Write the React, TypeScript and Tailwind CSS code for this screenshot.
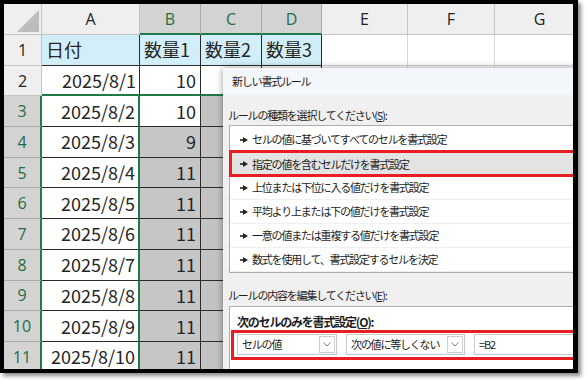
import React from "react";

const cols = ["A", "B", "C", "D", "E", "F", "G"];

const rows: string[][] = [
  ["日付", "数量1", "数量2", "数量3"],
  ["2025/8/1", "10"],
  ["2025/8/2", "10"],
  ["2025/8/3", "9"],
  ["2025/8/4", "11"],
  ["2025/8/5", "11"],
  ["2025/8/6", "11"],
  ["2025/8/7", "11"],
  ["2025/8/8", "11"],
  ["2025/8/9", "11"],
  ["2025/8/10", "11"],
];

const rules = [
  "セルの値に基づいてすべてのセルを書式設定",
  "指定の値を含むセルだけを書式設定",
  "上位または下位に入る値だけを書式設定",
  "平均より上または下の値だけを書式設定",
  "一意の値または重複する値だけを書式設定",
  "数式を使用して、書式設定するセルを決定",
];

const Arrow = () => (
  <svg width="8" height="6" viewBox="0 0 8 6" className="shrink-0">
    <rect x="0" y="2.2" width="4" height="1.6" fill="#222" />
    <polygon points="3,0 8,3 3,6" fill="#222" />
  </svg>
);

const Chevron = () => (
  <svg width="8" height="5" viewBox="0 0 8 5">
    <polyline points="0.5,0.5 4,4 7.5,0.5" fill="none" stroke="#808080" strokeWidth="1" />
  </svg>
);

const Combo = ({ label, width }: { label: string; width: string }) => (
  <div className={`${width} shrink-0 h-[21px] flex border border-[#c8c8c8] bg-white`}>
    <div className="flex-1 flex items-center pl-[4px] whitespace-nowrap text-[#222]">{label}</div>
    <div className="w-[16px] my-[1px] mr-[1px] flex items-center justify-center border border-[#d0d0d0]">
      <Chevron />
    </div>
  </div>
);

function cellClass(r: number, c: number) {
  // r: 1-based row, c: 0-based column (A=0)
  let cls = "flex items-center overflow-hidden whitespace-nowrap text-[18px] text-[#262626] ";
  if (c <= 3) cls += "border-r border-b border-[#2a2a2a] ";
  else cls += "border-r border-b border-[#d9d9d9] ";

  if (r === 1) {
    if (c <= 3) cls += "bg-[#d2eef9] justify-start pl-[4px] ";
    else cls += "bg-white ";
  } else if (c === 0) {
    cls += "bg-white justify-end pr-[3px] ";
  } else if (c === 1) {
    cls += (r <= 3 ? "bg-white " : "bg-[#c6c6c6] ") + "justify-end pr-[4px] ";
  } else if (c <= 3) {
    cls += r === 2 ? "bg-white " : "bg-[#c3c3c3] ";
  } else {
    cls += "bg-white ";
  }

  if (c === 0 && r >= 3) cls += "border-r-2 border-r-[#1f7a45] ";
  if (r === 2 && c <= 2) cls += "border-b-2 border-b-[#1f7a45] ";
  return cls;
}

export default function App() {
  return (
    <div className="w-[586px] h-[380px] bg-white font-['Noto_Sans_CJK_JP',sans-serif]">
      <div className="relative w-[578px] h-[373px] border-4 border-r-[5px] border-black overflow-hidden shadow-[3px_3px_4px_rgba(0,0,0,0.45)]">
        <div className="grid grid-cols-[38px_98px_61px_61px_60px_86px_87px_90px] grid-rows-[31px] auto-rows-[30.7px]">
          <div className="relative bg-[#efefef] border-r border-b border-[#c4c4c4]">
            <svg width="38" height="31" className="absolute inset-0">
              <polygon points="35,6 35,28 13,28" fill="#bcbcbc" />
            </svg>
          </div>
          {cols.map((h, i) => {
            const sel = i >= 1 && i <= 3;
            return (
              <div
                key={h}
                className={
                  sel
                    ? "flex items-center justify-center bg-[#d3d3d3] border-r border-r-[#a9a9a9] border-b-2 border-b-[#1f7a45] text-[16px] text-[#1f6e43] font-['Open_Sans',sans-serif]"
                    : "flex items-center justify-center bg-[#efefef] border-r border-b border-[#c4c4c4] text-[16px] text-[#222] font-['Open_Sans',sans-serif]"
                }
              >
                {h}
              </div>
            );
          })}
          {rows.map((row, ri) => {
            const r = ri + 1;
            return (
              <React.Fragment key={r}>
                <div
                  className={
                    r >= 3
                      ? "flex items-center justify-center bg-[#d3d3d3] border-b border-b-[#a9a9a9] border-r-2 border-r-[#1f7a45] text-[16px] text-[#1f6e43] font-['Open_Sans',sans-serif]"
                      : "flex items-center justify-center bg-[#efefef] border-b border-r border-[#c4c4c4] text-[16px] text-[#222] font-['Open_Sans',sans-serif]"
                  }
                >
                  {r}
                </div>
                {cols.map((_, c) => (
                  <div key={c} className={cellClass(r, c)}>
                    {row[c] ?? ""}
                  </div>
                ))}
              </React.Fragment>
            );
          })}
        </div>

        {/* dialog window floating over the sheet */}
        <div className="absolute left-[219px] top-[64px] w-[420px] h-[320px] bg-[#f0f0f0] shadow-[0_0_7px_rgba(0,0,0,0.4)] text-[#1e1e1e] text-[11px] tracking-[-1.2px]">
          <div className="h-[27px] flex items-center pl-[9px] bg-[#f3f7fc]">新しい書式ルール</div>
          <div className="px-[5px]">
            <div className="h-[30px] flex items-end pb-[2px] leading-[16px]">
              ルールの種類を選択してください(<span className="underline">S</span>):
            </div>
            <div className="ml-px border border-[#adadad] bg-white pt-[2px]">
              {rules.map((t, i) => (
                <div
                  key={t}
                  className={
                    i === 1
                      ? "relative h-[24px] flex items-center gap-[4px] pl-[10px] bg-[#e3e3e3]"
                      : "h-[24px] flex items-center gap-[4px] pl-[10px] border-b border-[#f0f0f0]"
                  }
                >
                  <Arrow />
                  <span>{t}</span>
                  {i === 1 && (
                    <div className="absolute -top-[2px] -bottom-px -left-px right-0 border-[3px] border-[#ea1c24]" />
                  )}
                </div>
              ))}
            </div>
            <div className="h-[33px] flex items-end pb-[3px] leading-[16px]">
              ルールの内容を編集してください(<span className="underline">E</span>):
            </div>
            <div className="ml-px h-[80px] border border-[#adadad] bg-white">
              <div className="pl-[7px] pt-[7px] leading-[16px] text-[12px] font-bold">
                次のセルのみを書式設定(<span className="underline">O</span>):
              </div>
              <div className="ml-px flex gap-[9px] border-[3px] border-[#ea1c24] pt-[1px] pb-[2px] pl-[3px]">
                <Combo label="セルの値" width="w-[100px]" />
                <Combo label="次の値に等しくない" width="w-[119px]" />
                <div className="w-[200px] shrink-0 h-[21px] flex items-center pl-[4px] border border-[#c8c8c8] bg-white">
                  =B2
                </div>
              </div>
            </div>
          </div>
        </div>
      </div>
    </div>
  );
}
